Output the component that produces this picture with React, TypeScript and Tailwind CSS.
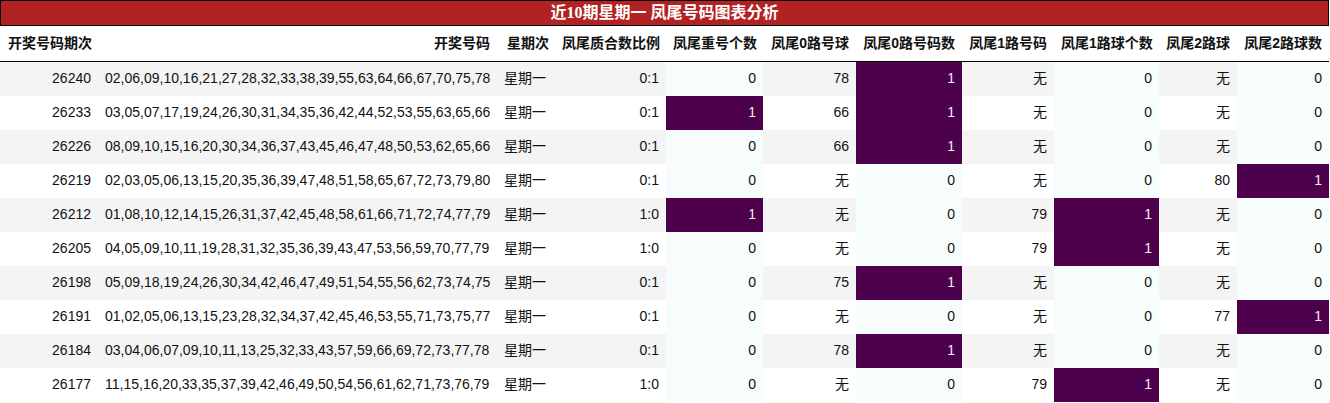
type Row = {
  issue: string;
  nums: string;
  ratio: string;
  repeat: number;
  r0: string;
  r0n: number;
  r1: string;
  r1n: number;
  r2: string;
  r2n: number;
};

const rows: Row[] = [
  { issue: "26240", nums: "02,06,09,10,16,21,27,28,32,33,38,39,55,63,64,66,67,70,75,78", ratio: "0:1", repeat: 0, r0: "78", r0n: 1, r1: "无", r1n: 0, r2: "无", r2n: 0 },
  { issue: "26233", nums: "03,05,07,17,19,24,26,30,31,34,35,36,42,44,52,53,55,63,65,66", ratio: "0:1", repeat: 1, r0: "66", r0n: 1, r1: "无", r1n: 0, r2: "无", r2n: 0 },
  { issue: "26226", nums: "08,09,10,15,16,20,30,34,36,37,43,45,46,47,48,50,53,62,65,66", ratio: "0:1", repeat: 0, r0: "66", r0n: 1, r1: "无", r1n: 0, r2: "无", r2n: 0 },
  { issue: "26219", nums: "02,03,05,06,13,15,20,35,36,39,47,48,51,58,65,67,72,73,79,80", ratio: "0:1", repeat: 0, r0: "无", r0n: 0, r1: "无", r1n: 0, r2: "80", r2n: 1 },
  { issue: "26212", nums: "01,08,10,12,14,15,26,31,37,42,45,48,58,61,66,71,72,74,77,79", ratio: "1:0", repeat: 1, r0: "无", r0n: 0, r1: "79", r1n: 1, r2: "无", r2n: 0 },
  { issue: "26205", nums: "04,05,09,10,11,19,28,31,32,35,36,39,43,47,53,56,59,70,77,79", ratio: "1:0", repeat: 0, r0: "无", r0n: 0, r1: "79", r1n: 1, r2: "无", r2n: 0 },
  { issue: "26198", nums: "05,09,18,19,24,26,30,34,42,46,47,49,51,54,55,56,62,73,74,75", ratio: "0:1", repeat: 0, r0: "75", r0n: 1, r1: "无", r1n: 0, r2: "无", r2n: 0 },
  { issue: "26191", nums: "01,02,05,06,13,15,23,28,32,34,37,42,45,46,53,55,71,73,75,77", ratio: "0:1", repeat: 0, r0: "无", r0n: 0, r1: "无", r1n: 0, r2: "77", r2n: 1 },
  { issue: "26184", nums: "03,04,06,07,09,10,11,13,25,32,33,43,57,59,66,69,72,73,77,78", ratio: "0:1", repeat: 0, r0: "78", r0n: 1, r1: "无", r1n: 0, r2: "无", r2n: 0 },
  { issue: "26177", nums: "11,15,16,20,33,35,37,39,42,46,49,50,54,56,61,62,71,73,76,79", ratio: "1:0", repeat: 0, r0: "无", r0n: 0, r1: "79", r1n: 1, r2: "无", r2n: 0 },
];

const headers = [
  "开奖号码期次",
  "开奖号码",
  "星期次",
  "凤尾质合数比例",
  "凤尾重号个数",
  "凤尾0路号球",
  "凤尾0路号码数",
  "凤尾1路号码",
  "凤尾1路球个数",
  "凤尾2路球",
  "凤尾2路球数",
];

const widths = [
  "w-[99px]",
  "w-[401px]",
  "w-[55px]",
  "w-[111px]",
  "w-[97px]",
  "w-[93px]",
  "w-[106px]",
  "w-[92px]",
  "w-[105px]",
  "w-[78px]",
  "w-[92px]",
];

function Heat({ v }: { v: number }) {
  return (
    <td
      className={
        v === 1
          ? "bg-[#4d004b] text-[#f0f0f0] px-[7px] text-right"
          : "bg-[#f7fcfd] px-[7px] text-right"
      }
    >
      {v}
    </td>
  );
}

export default function App() {
  return (
    <div className="w-[1330px] bg-white text-[14px] text-[#111] font-['Liberation_Sans','Noto_Sans_CJK_SC',sans-serif]">
      <div className="h-[26px] w-[1329px] border border-black bg-[#b22222] text-center text-[16px] leading-[24px] font-bold text-white font-['Liberation_Serif','Noto_Sans_CJK_SC',serif]">
        近10期星期一 凤尾号码图表分析
      </div>
      <table className="table-fixed border-collapse w-[1329px]">
        <colgroup>
          {widths.map((w, i) => (
            <col key={i} className={w} />
          ))}
        </colgroup>
        <thead>
          <tr className="h-[35.5px] border-b border-black">
            {headers.map((h, i) => (
              <th
                key={h}
                className={
                  i === 1
                    ? "pl-[7px] pr-[10px] text-right font-bold whitespace-nowrap"
                    : "px-[7px] text-right font-bold whitespace-nowrap"
                }
              >
                {h}
              </th>
            ))}
          </tr>
        </thead>
        <tbody>
          {rows.map((r, i) => (
            <tr key={r.issue} className={i % 2 === 0 ? "h-[34px] bg-[#f4f4f4]" : "h-[34px] bg-white"}>
              <td className="px-[8px] text-right">{r.issue}</td>
              <td className="pl-[6px] pr-[11px] text-right whitespace-nowrap">{r.nums}</td>
              <td className="pl-[4px] pr-[9px] text-right whitespace-nowrap">星期一</td>
              <td className="px-[7px] text-right">{r.ratio}</td>
              <Heat v={r.repeat} />
              <td className="px-[7px] text-right">{r.r0}</td>
              <Heat v={r.r0n} />
              <td className="px-[7px] text-right">{r.r1}</td>
              <Heat v={r.r1n} />
              <td className="px-[7px] text-right">{r.r2}</td>
              <Heat v={r.r2n} />
            </tr>
          ))}
        </tbody>
      </table>
    </div>
  );
}
